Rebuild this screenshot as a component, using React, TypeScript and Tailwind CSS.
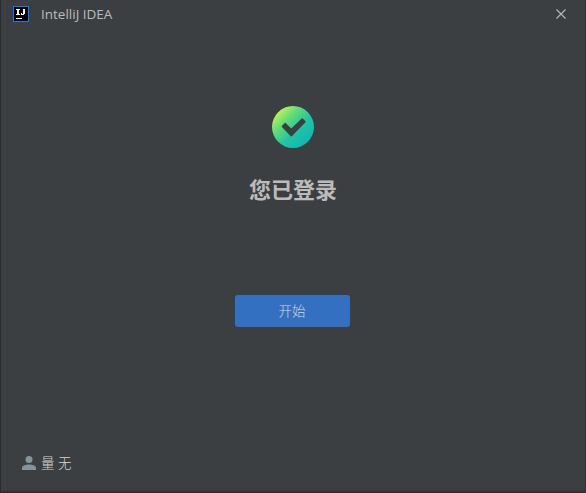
import React from "react";

function IdeaLogo() {
  return (
    <svg width="16" height="16" viewBox="0 0 16 16" shapeRendering="crispEdges" className="shrink-0">
      <rect width="16" height="16" fill="#087cfa" />
      <rect x="1" y="1" width="14" height="14" fill="#000" />
      <path d="M3 3h4v1H3zM4 4h2v4H4zM3 8h4v1H3zM10 3h2v5h-2zM8 7h1v1H8zM8 8h3v1H8zM3 12h6v1H3z" fill="#fff" />
    </svg>
  );
}

function CheckBadge() {
  return (
    <svg width="42" height="42" viewBox="0 0 42 42" className="mt-[78px]">
      <defs>
        <linearGradient id="badge" x1="4" y1="5" x2="37" y2="38" gradientUnits="userSpaceOnUse">
          <stop offset="0" stopColor="#cdf654" />
          <stop offset="0.3" stopColor="#62dc77" />
          <stop offset="0.6" stopColor="#22c5a1" />
          <stop offset="1" stopColor="#0eb5b5" />
        </linearGradient>
      </defs>
      <circle cx="21" cy="21" r="21" fill="url(#badge)" />
      <path
        d="M10.4 20.4 13.2 17.6 19.3 23.4 30.2 12.9 33 15.8 19.3 29.8Z"
        fill="#3c3f41"
        stroke="#3c3f41"
        strokeWidth="1.4"
        strokeLinejoin="round"
      />
    </svg>
  );
}

export default function App() {
  return (
    <div className="flex h-[493px] w-[586px] flex-col border-b-2 border-l border-r border-b-[#302f31] border-l-[#292b2d] border-r-[#303234] bg-[#3c3f41] font-['Noto_Sans','Noto_Sans_CJK_SC',sans-serif] text-[#bbbbbb]">
      <header className="flex h-7 shrink-0 items-center pl-3">
        <IdeaLogo />
        <span className="ml-3 font-['Open_Sans',sans-serif] text-[13.5px] leading-7">IntelliJ IDEA</span>
        <svg width="10" height="10" viewBox="0 0 10 10" className="mr-[19px] ml-auto">
          <path d="M0.5 0.5l9 9M9.5 0.5l-9 9" stroke="#b8b9ba" strokeWidth="1.1" />
        </svg>
      </header>
      <main className="flex flex-1 flex-col items-center">
        <CheckBadge />
        <h1 className="mt-[23px] text-[22px] leading-9 font-bold">您已登录</h1>
        <button className="mt-[88px] mr-px h-8 w-[115px] rounded-[3px] bg-[#3470c2] pr-px pb-0.5 font-['Noto_Sans_CJK_SC',sans-serif] text-[13.5px] leading-[30px] font-light text-[#d6d6d6]">开始</button>
      </main>
      <footer className="flex h-[42px] shrink-0 items-start pl-[21px]">
        <svg width="14" height="14" viewBox="0 0 14 14" className="mt-[7px]" fill="#87939a">
          <circle cx="7" cy="3.5" r="3.5" />
          <path d="M0 14v-2.2C0 9.5 4.2 8.4 7 8.4s7 1.1 7 3.4V14z" />
        </svg>
        <span className="ml-[5px] text-[13.5px] leading-7 font-light text-[#d6d6d6]">量 无</span>
      </footer>
    </div>
  );
}
